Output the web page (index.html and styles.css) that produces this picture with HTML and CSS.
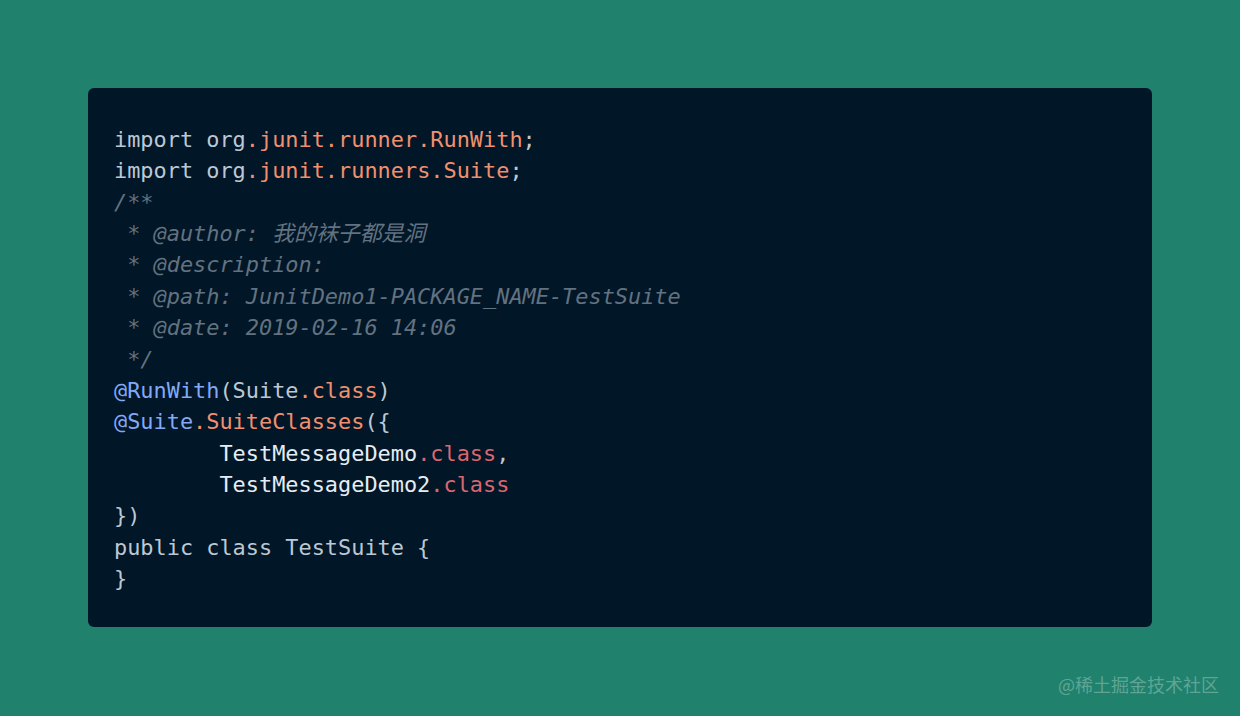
FILE: index.html
```html
<!DOCTYPE html>
<html lang="zh">
<head>
<meta charset="utf-8">
<link rel="stylesheet" href="styles.css">
</head>
<body>
<div class="page">
  <div class="card">
<pre class="code"><span class="pl">import org</span><span class="or">.junit.runner.RunWith</span><span class="pl">;</span>
<span class="pl">import org</span><span class="or">.junit.runners.Suite</span><span class="pl">;</span>
<span class="cm">/**</span>
<span class="cm"> * @author: 我的袜子都是洞</span>
<span class="cm"> * @description:</span>
<span class="cm"> * @path: JunitDemo1-PACKAGE_NAME-TestSuite</span>
<span class="cm"> * @date: 2019-02-16 14:06</span>
<span class="cm"> */</span>
<span class="bl">@RunWith</span><span class="pl">(Suite</span><span class="or">.class</span><span class="pl">)</span>
<span class="bl">@Suite</span><span class="or">.SuiteClasses</span><span class="pl">({</span>
<span class="wh">        TestMessageDemo</span><span class="rd">.class</span><span class="pl">,</span>
<span class="wh">        TestMessageDemo2</span><span class="rd">.class</span>
<span class="pl">})</span>
<span class="pl">public class TestSuite {</span>
<span class="pl">}</span></pre>
  </div>
  <div class="mark">@稀土掘金技术社区</div>
</div>
</body>
</html>
```

FILE: styles.css
```css
html, body {
  margin: 0;
  padding: 0;
}
body {
  width: 1240px;
  height: 716px;
  background: #20816d;
  overflow: hidden;
}
.page {
  position: relative;
  width: 1240px;
  height: 716px;
  padding: 88px 88px 0 88px;
  box-sizing: border-box;
}
.card {
  width: 1064px;
  height: 539px;
  box-sizing: border-box;
  background: #011627;
  border-radius: 6px;
  padding: 36px 26px 0 26px;
}
.code {
  margin: 0;
  font-family: "DejaVu Sans Mono", "Noto Sans CJK SC", monospace;
  font-size: 21.9px;
  line-height: 31.36px;
  color: #bcc8d4;
  white-space: pre;
}
.pl { color: #bcc8d4; }
.wh { color: #e6edf4; }
.or { color: #f0906e; }
.rd { color: #dc6670; }
.bl { color: #82a9f5; }
.cm { color: #627280; font-style: italic; }
.mark {
  position: absolute;
  right: 21px;
  bottom: 19px;
  font-family: "Noto Sans CJK SC", "Noto Sans", sans-serif;
  font-size: 18px;
  color: #5fa596;
}
```
